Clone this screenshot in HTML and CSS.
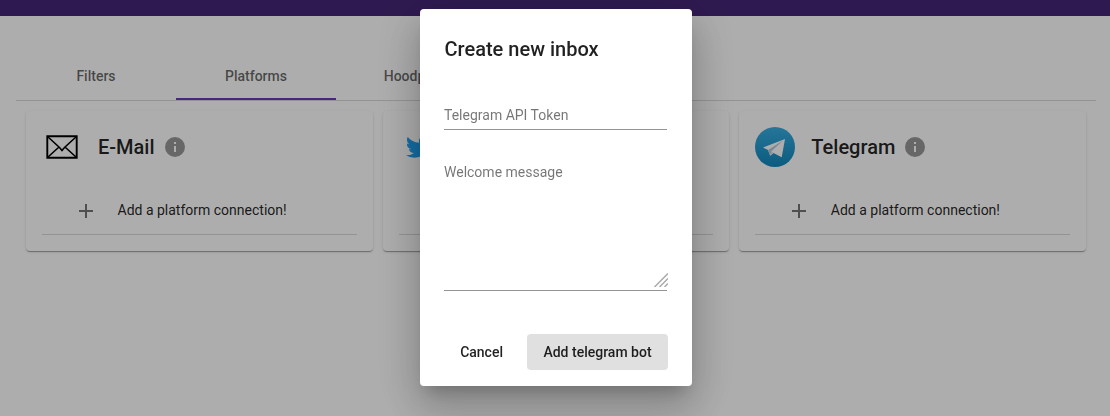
FILE: index.html
```html
<!DOCTYPE html>
<html lang="en">
<head>
<meta charset="utf-8">
<title>Platforms</title>
<link rel="stylesheet" href="styles.css">
</head>
<body>
<header class="toolbar"></header>
<main class="page">
  <nav class="tabs">
    <a class="tab">Filters</a>
    <a class="tab tab-active">Platforms</a>
    <a class="tab">Hoodpage</a>
  </nav>
  <section class="cards">
    <article class="card">
      <div class="card-header">
        <svg class="avatar" viewBox="0 0 40 40" fill="none" stroke="#000" stroke-width="1.9"><path d="M5.3 9.2h29.4v21.6H5.3z"/><path d="M5.5 9.5L17.500 20.500l2.500 3 2.500-3L34.500 9.500M5.500 30.500L17 20M34.500 30.500L23 20" stroke-width="1.6"/></svg>
        <h2 class="card-title">E-Mail</h2>
        <svg class="info" viewBox="0 0 24 24"><path d="M12 2a10 10 0 1 0 0 20 10 10 0 0 0 0-20zm1 15h-2v-6h2v6zm0-8h-2V7h2v2z"/></svg>
      </div>
      <div class="add-row">
        <svg class="plus" viewBox="0 0 24 24"><path d="M19 13h-6v6h-2v-6H5v-2h6V5h2v6h6v2z"/></svg>
        <span>Add a platform connection!</span>
      </div>
    </article>
    <article class="card">
      <div class="card-header">
        <svg class="avatar" viewBox="0 0 40 40"><path fill="#1da1f2" transform="translate(6.9 6.4) scale(1.12)" d="M23.95 4.57a10 10 0 0 1-2.82.77 4.96 4.96 0 0 0 2.16-2.72c-.95.55-2 .95-3.13 1.18a4.92 4.92 0 0 0-8.38 4.48C7.69 8.09 4.07 6.13 1.64 3.16a4.82 4.82 0 0 0-.67 2.48c0 1.71.87 3.21 2.19 4.1a4.9 4.9 0 0 1-2.23-.62v.06a4.92 4.92 0 0 0 3.95 4.83 5 5 0 0 1-2.21.08 4.94 4.94 0 0 0 4.6 3.42A9.87 9.87 0 0 1 0 19.54a13.99 13.99 0 0 0 7.56 2.21c9.05 0 14-7.5 14-13.98 0-.21 0-.42-.02-.63a9.94 9.94 0 0 0 2.41-2.57z"/></svg>
        <h2 class="card-title">Twitter</h2>
        <svg class="info" viewBox="0 0 24 24"><path d="M12 2a10 10 0 1 0 0 20 10 10 0 0 0 0-20zm1 15h-2v-6h2v6zm0-8h-2V7h2v2z"/></svg>
      </div>
      <div class="add-row">
        <svg class="plus" viewBox="0 0 24 24"><path d="M19 13h-6v6h-2v-6H5v-2h6V5h2v6h6v2z"/></svg>
        <span>Add a platform connection!</span>
      </div>
    </article>
    <article class="card">
      <div class="card-header">
        <svg class="avatar" viewBox="0 0 40 40">
          <defs><linearGradient id="sky" x1="0" y1="0" x2="0" y2="1"><stop offset="0" stop-color="#37aee2"/><stop offset="1" stop-color="#1287bd"/></linearGradient></defs>
          <circle cx="20" cy="20" r="20" fill="url(#sky)"/>
          <path fill="#fff" d="M8 20.400L30 12 26.700 30.300 18.500 25.900 15.200 28.800 13 22.900z"/>
          <path fill="#b4c8dc" d="M13 22.900L28 13.500 16.400 24.300 15.200 28.800z"/>
          <path fill="#d6dfe8" d="M16.400 24.300L18.500 25.900 15.200 28.800z"/>
        </svg>
        <h2 class="card-title">Telegram</h2>
        <svg class="info" viewBox="0 0 24 24"><path d="M12 2a10 10 0 1 0 0 20 10 10 0 0 0 0-20zm1 15h-2v-6h2v6zm0-8h-2V7h2v2z"/></svg>
      </div>
      <div class="add-row">
        <svg class="plus" viewBox="0 0 24 24"><path d="M19 13h-6v6h-2v-6H5v-2h6V5h2v6h6v2z"/></svg>
        <span>Add a platform connection!</span>
      </div>
    </article>
  </section>
</main>
<div class="backdrop">
  <div class="dialog" role="dialog">
    <h1 class="dialog-title">Create new inbox</h1>
    <div class="field"><label>Telegram API Token</label></div>
    <div class="field field-area">
      <label>Welcome message</label>
      <svg class="grip" viewBox="0 0 14 14"><path d="M.5 14L14 .5M5.500 14L14 5.500M10.500 14l3.500-3.500"/></svg>
    </div>
    <div class="actions">
      <button class="btn">Cancel</button>
      <button class="btn btn-focused">Add telegram bot</button>
    </div>
  </div>
</div>
</body>
</html>
```
FILE: styles.css
```css
* { box-sizing: border-box; }
body {
  margin: 0;
  height: 416px;
  overflow: hidden;
  background: #fff;
  color: rgba(0, 0, 0, .87);
  font: 14px/20px Roboto, sans-serif;
}
h1, h2 { margin: 0; font-weight: 500; font-size: 20px; }
.toolbar { height: 16px; background: #452776; }
.page { padding: 36px 14px 0 16px; }
.tabs {
  display: flex;
  height: 49px;
  border-bottom: 1px solid rgba(0, 0, 0, .15);
}
.tab {
  width: 160px;
  text-align: center;
  line-height: 48px;
  font-weight: 500;
  color: rgba(0, 0, 0, .6);
}
.tab-active { border-bottom: 2px solid #673ab7; }
.cards {
  display: grid;
  grid-template-columns: repeat(3, 1fr);
  gap: 10px;
  padding: 10px 10px 0;
}
.card {
  height: 140px;
  padding: 16px;
  border-radius: 4px;
  box-shadow: 0 2px 1px -1px rgba(0, 0, 0, .2), 0 1px 1px rgba(0, 0, 0, .14), 0 1px 3px rgba(0, 0, 0, .12);
}
.card-header { display: flex; align-items: center; height: 40px; }
.avatar { width: 40px; height: 40px; }
.card-title { margin: 0 8px 0 16px; line-height: 32px; }
.info { width: 24px; height: 24px; fill: rgba(0, 0, 0, .4); }
.add-row {
  display: flex;
  align-items: center;
  gap: 19.500px;
  height: 49px;
  margin-top: 19px;
  padding-left: 32px;
  border-bottom: 1px solid rgba(0, 0, 0, .15);
}
.plus { width: 24px; height: 24px; margin-top: 2px; fill: rgba(0, 0, 0, .54); }
.backdrop {
  position: fixed;
  inset: 0;
  display: flex;
  justify-content: center;
  align-items: flex-start;
  padding: 9px 0 0 2px;
  background: rgba(0, 0, 0, .32);
}
.dialog {
  width: 272px;
  height: 377px;
  padding: 24px;
  border-radius: 4px;
  background: #fff;
  box-shadow: 0 11px 15px -7px rgba(0, 0, 0, .2), 0 24px 38px 3px rgba(0, 0, 0, .14), 0 9px 46px 8px rgba(0, 0, 0, .12);
}
.dialog-title { padding-left: .5px; line-height: 32px; }
.field {
  width: 223px;
  height: 25px;
  margin-top: 40px;
  border-bottom: 1px solid rgba(0, 0, 0, .42);
  color: rgba(0, 0, 0, .54);
}
.field-area {
  display: flex;
  justify-content: space-between;
  height: 129px;
  margin-top: 32px;
}
.grip {
  flex: none;
  align-self: flex-end;
  width: 14px;
  height: 14px;
  margin: 0 -1px 3px 0;
  fill: none;
  stroke: #aaa;
  stroke-width: 1.5;
}
.actions { display: flex; justify-content: flex-end; gap: 8px; margin-top: 43px; }
.btn {
  height: 36px;
  padding: 0 16px;
  border: 0;
  border-radius: 4px;
  background: transparent;
  color: rgba(0, 0, 0, .87);
  font: 500 14px/36px Roboto, sans-serif;
}
.btn-focused { width: 141px; background: #e0e0e0; }
```
